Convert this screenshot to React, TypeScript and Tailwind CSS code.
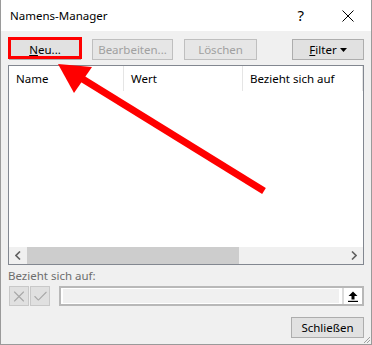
import { X, Check } from 'lucide-react'

const font = { fontFamily: '"Noto Sans", "Liberation Sans", sans-serif' }

function Btn({ label, disabled, className = '' }: { label: React.ReactNode; disabled?: boolean; className?: string }) {
  return (
    <div
      className={`h-[21px] flex items-center justify-center border text-[11.5px] leading-none ${
        disabled ? 'bg-[#e6e6e6] border-[#bfbfbf] text-[#a0a0a0]' : 'bg-[#e1e1e1] border-[#adadad] text-black'
      } ${className}`}
    >
      {label}
    </div>
  )
}

export default function App() {
  return (
    <div className="relative w-[372px] h-[345px] flex flex-col border-l border-r border-b border-[#9a9a9a] bg-[#f0f0f0] overflow-hidden" style={font}>
      {/* Title bar */}
      <div className="h-[31px] bg-white flex items-center pl-[9px] shrink-0">
        <span className="text-[11.5px] text-black">Namens-Manager</span>
        <span className="ml-auto text-[15px] text-black mr-[38px]">?</span>
        <svg width="12" height="12" viewBox="0 0 12 12" className="mr-[17px]">
          <path d="M0.5 0.5 L11.5 11.5 M11.5 0.5 L0.5 11.5" stroke="#000" strokeWidth="1" />
        </svg>
      </div>

      <div className="flex-1 px-[7px] flex flex-col">
        {/* Buttons */}
        <div className="flex mt-[8px] pl-[1px]">
          <Btn className="w-[72px]" label={<span><u>N</u>eu...</span>} />
          <Btn className="w-[81px] ml-[11px]" disabled label="Bearbeiten..." />
          <Btn className="w-[73px] ml-[11px]" disabled label="Löschen" />
          <Btn
            className="w-[72px] ml-auto"
            label={
              <span className="flex items-center gap-[3px]">
                <span><u>F</u>ilter</span>
                <svg width="7" height="4" viewBox="0 0 7 4"><path d="M0 0 H7 L3.5 4 Z" fill="#000" /></svg>
              </span>
            }
          />
        </div>

        {/* List */}
        <div className="mt-[5px] h-[200px] border border-[#828790] bg-white flex flex-col">
          <div className="flex h-[25px] items-center text-[11.5px] text-black">
            <div className="w-[115px] pl-[7px] h-full flex items-center border-r border-[#e5e5e5]">Name</div>
            <div className="w-[119px] pl-[7px] h-full flex items-center border-r border-[#e5e5e5]">Wert</div>
            <div className="w-[120px] pl-[7px] h-full flex items-center border-r border-[#e5e5e5]">Bezieht sich auf</div>
          </div>
          <div className="flex-1" />
          <div className="h-[17px] bg-[#f0f0f0] flex items-center">
            <div className="w-[18px] flex justify-center">
              <svg width="6" height="9" viewBox="0 0 6 9"><path d="M5 0.5 L1 4.5 L5 8.5" stroke="#606060" strokeWidth="1.6" fill="none" /></svg>
            </div>
            <div className="w-[212px] h-full bg-[#cdcdcd]" />
            <div className="flex-1" />
            <div className="w-[18px] flex justify-center">
              <svg width="6" height="9" viewBox="0 0 6 9"><path d="M1 0.5 L5 4.5 L1 8.5" stroke="#606060" strokeWidth="1.6" fill="none" /></svg>
            </div>
          </div>
        </div>

        {/* Refers to */}
        <div className="mt-[2px] text-[11.5px] text-[#6d6d6d] leading-[18px]">Bezieht sich auf:</div>
        <div className="flex mt-[1px] h-[20px] pl-[1px]">
          <div className="w-[20px] h-[20px] border border-[#c8c8c8] bg-[#e0e0e0] flex items-center justify-center">
            <X size={19} strokeWidth={1.5} color="#a8a8a8" />
          </div>
          <div className="w-[20px] h-[20px] ml-[1px] border border-[#c8c8c8] bg-[#e0e0e0] flex items-center justify-center">
            <Check size={17} strokeWidth={1.5} color="#a8a8a8" />
          </div>
          <div className="ml-[9px] flex-1 border-2 border-[#b8b8b8] bg-white flex items-stretch">
            <div className="flex-1 my-[1px] ml-[2px] bg-[#f0f0f0]" />
            <div className="w-[20px] ml-[3px] border-l-2 border-[#dcdcdc] bg-white flex items-center justify-center">
              <svg width="10" height="11" viewBox="0 0 10 11">
                <path d="M5 0.5 L9.5 5 H6.5 V8.5 H3.5 V5 H0.5 Z" fill="#000" />
                <rect x="0" y="9.8" width="10" height="1.2" fill="#000" />
              </svg>
            </div>
          </div>
        </div>

        <div className="flex mt-[11px]">
          <Btn className="w-[73px] ml-auto" label="Schließen" />
        </div>
      </div>

      {/* resize grip */}
      <svg className="absolute right-0 bottom-0" width="10" height="10" viewBox="0 0 10 10">
        <path d="M9 3 L3 9 M9 6 L6 9" stroke="#a0a0a0" strokeWidth="1" />
      </svg>

      {/* annotation overlay */}
      <div className="absolute left-[7px] top-[37px] w-[74px] h-[22px] border-[3px] border-[#ff0000]" />
      <svg className="absolute left-0 top-0 pointer-events-none" width="372" height="345" viewBox="0 0 372 345">
        <line x1="263" y1="191" x2="80" y2="78" stroke="#ff0000" strokeWidth="7" />
        <polygon points="57,64 91,67 73,93" fill="#ff0000" />
      </svg>
    </div>
  )
}
